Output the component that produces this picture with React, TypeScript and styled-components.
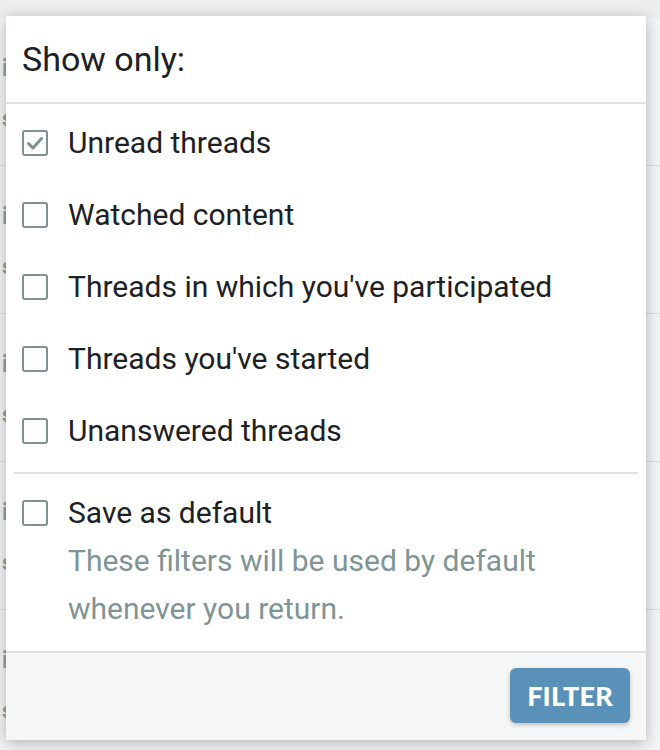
import React, { FC } from "react";
import styled, { createGlobalStyle } from "styled-components";

const GlobalStyle = createGlobalStyle`
  html, body {
    margin: 0;
    padding: 0;
    background: #eceef0;
  }
  * {
    box-sizing: border-box;
  }
`;

const Page = styled.div`
  position: relative;
  width: 660px;
  height: 750px;
  overflow: hidden;
  font-family: Roboto, "Liberation Sans", sans-serif;
`;

const BgList = styled.div`
  margin-top: 18px;
  background: #f4f5f6;
`;

const BgRow = styled.div`
  height: 148px;
  border-bottom: 1px solid #dcdcdc;
  padding-top: 36px;
  padding-left: 2px;
  color: #9a9fa3;
`;

const BgTitle = styled.div`
  font-size: 24px;
  font-weight: 700;
`;

const BgSub = styled.div`
  font-size: 22px;
  font-weight: 700;
  margin-top: 24px;
`;

const Panel = styled.div`
  position: absolute;
  left: 6px;
  top: 16px;
  width: 640px;
  height: 724px;
  background: #fff;
  box-shadow: 0 3px 14px rgba(0, 0, 0, 0.28);
  display: flex;
  flex-direction: column;
`;

const Header = styled.div`
  height: 88px;
  display: flex;
  align-items: center;
  padding: 0 16px;
  font-size: 34px;
  color: #1d2124;
  border-bottom: 2px solid #e0e0e0;
`;

const Options = styled.div`
  padding: 3px 0 3px;
`;

const Item = styled.label`
  display: flex;
  align-items: flex-start;
  padding: 12px 16px;
  gap: 20px;
  cursor: pointer;
`;

const Box = styled.span`
  flex: none;
  width: 26px;
  height: 26px;
  margin-top: 11px;
  border: 2.5px solid #7e9090;
  border-radius: 3px;
  display: flex;
  align-items: center;
  justify-content: center;
`;

const LabelBlock = styled.div`
  display: flex;
  flex-direction: column;
`;

const Label = styled.span`
  font-size: 30px;
  line-height: 48px;
  color: #1d2124;
`;

const Hint = styled.span`
  font-size: 30px;
  line-height: 48px;
  color: #7f9494;
`;

const Divider = styled.div`
  height: 2px;
  margin: 2px 8px 0;
  background: #e0e0e0;
`;

const SaveSection = styled.div`
  padding: 3px 0 6px;
`;

const Footer = styled.div`
  flex: 1;
  display: flex;
  justify-content: flex-end;
  align-items: flex-start;
  padding: 15px 16px;
  background: #f5f7f7;
  border-top: 2px solid #e0e0e0;
`;

const FilterButton = styled.button`
  width: 120px;
  height: 55px;
  border: none;
  border-radius: 6px;
  background: #5a91b8;
  color: #fff;
  font-family: Lato, "Open Sans", sans-serif;
  font-weight: 900;
  font-size: 27px;
  letter-spacing: 0.2px;
  box-shadow: 0 2px 4px rgba(0, 0, 0, 0.22);
  cursor: pointer;
`;

const CheckBox: FC<{ checked?: boolean }> = ({ checked }) => (
  <Box>
    {checked && (
      <svg width="20" height="20" viewBox="0 0 20 20">
        <polyline
          points="3.5,10.5 8,15 16.5,5.5"
          fill="none"
          stroke="#7e9090"
          strokeWidth="3"
          strokeLinecap="round"
          strokeLinejoin="round"
        />
      </svg>
    )}
  </Box>
);

const filters = [
  { label: "Unread threads", checked: true },
  { label: "Watched content", checked: false },
  { label: "Threads in which you've participated", checked: false },
  { label: "Threads you've started", checked: false },
  { label: "Unanswered threads", checked: false },
];

export const App: FC = () => {
  return (
    <Page>
      <GlobalStyle />
      <BgList>
        {[0, 1, 2, 3, 4].map((i) => (
          <BgRow key={i}>
            <BgTitle>ii</BgTitle>
            <BgSub>s</BgSub>
          </BgRow>
        ))}
      </BgList>
      <Panel>
        <Header>Show only:</Header>
        <Options>
          {filters.map((f) => (
            <Item key={f.label}>
              <CheckBox checked={f.checked} />
              <Label>{f.label}</Label>
            </Item>
          ))}
        </Options>
        <Divider />
        <SaveSection>
          <Item>
            <CheckBox />
            <LabelBlock>
              <Label>Save as default</Label>
              <Hint>These filters will be used by default</Hint>
              <Hint>whenever you return.</Hint>
            </LabelBlock>
          </Item>
        </SaveSection>
        <Footer>
          <FilterButton>FILTER</FilterButton>
        </Footer>
      </Panel>
    </Page>
  );
};

export default App;
